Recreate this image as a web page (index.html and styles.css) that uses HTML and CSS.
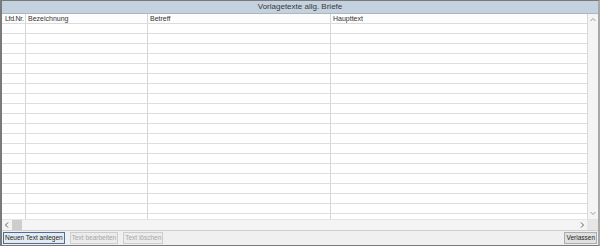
FILE: index.html
```html
<!DOCTYPE html>
<html lang="de">
<head>
    <meta charset="UTF-8">
    <title>Vorlagetexte allg. Briefe</title>
    <link rel="stylesheet" href="styles.css">
</head>
<body>
<div class="window">
    <div class="titlebar">Vorlagetexte allg. Briefe</div>
    <div class="gridArea">
        <div class="table">
            <div class="row head">
                <div class="cell c1">Lfd.Nr.</div>
                <div class="cell c2">Bezeichnung</div>
                <div class="cell c3">Betreff</div>
                <div class="cell c4">Haupttext</div>
            </div>
            <div class="rows" id="rows"></div>
        </div>
        <div class="vscroll">
            <svg class="arrow" width="10" height="10" viewBox="0 0 10 10"><path d="M2.5 6 L5 3.5 L7.5 6" fill="none" stroke="#9a9a9a" stroke-width="1"/></svg>
            <svg class="arrow" width="10" height="10" viewBox="0 0 10 10"><path d="M2.5 4 L5 6.5 L7.5 4" fill="none" stroke="#9a9a9a" stroke-width="1"/></svg>
        </div>
    </div>
    <div class="hscroll">
        <svg class="arrow" width="10" height="10" viewBox="0 0 10 10"><path d="M6 2.5 L3.5 5 L6 7.5" fill="none" stroke="#606060" stroke-width="1"/></svg>
        <div class="thumb"></div>
        <div class="track"></div>
        <svg class="arrow" width="10" height="10" viewBox="0 0 10 10"><path d="M4 2.5 L6.5 5 L4 7.5" fill="none" stroke="#606060" stroke-width="1"/></svg>
        <div class="corner"></div>
    </div>
    <div class="buttons">
        <button class="btn default">Neuen Text anlegen</button>
        <button class="btn" disabled>Text bearbeiten</button>
        <button class="btn" disabled>Text löschen</button>
        <span class="spacer"></span>
        <button class="btn">Verlassen</button>
    </div>
</div>
<script>
    var rows = document.getElementById("rows")
    for (var i = 0; i < 20; i++) {
        rows.innerHTML += '<div class="row"><div class="cell c1"></div><div class="cell c2"></div><div class="cell c3"></div><div class="cell c4"></div></div>'
    }
</script>
</body>
</html>
```

FILE: styles.css
```css
body {
    margin: 0;
    font-family: "Liberation Sans", Arial, sans-serif;
    font-size: 7px;
    color: #1e1e1e;
}

.window {
    width: 600px;
    height: 246px;
    box-sizing: border-box;
    border: 1px solid #7a7a7a;
    border-left-width: 2px;
    border-right: 2px solid #a8a8a8;
    background: #f0f0f0;
    display: flex;
    flex-direction: column;
    overflow: hidden;
}

.titlebar {
    height: 12px;
    line-height: 12px;
    flex: none;
    text-align: center;
    font-size: 8px;
    background: #c4d1de;
    border-bottom: 1px solid #a9b6c3;
    color: #3a3a3a;
}

.gridArea {
    flex: 1;
    display: flex;
    min-height: 0;
    background: #fff;
}

.table {
    flex: 1;
    overflow: hidden;
}

.rows {
    overflow: hidden;
}

.row {
    display: flex;
    height: 10px;
    border-bottom: 1px solid #dedede;
    box-sizing: border-box;
}
.row.head {
    border-bottom: 1px solid #dcdcdc;
    background: #fdfdfd;
}

.cell {
    height: 100%;
    line-height: 10px;
    border-right: 1px solid #d6d6d6;
    box-sizing: border-box;
    padding-left: 2px;
    white-space: nowrap;
    overflow: hidden;
    color: #333;
}
.c1 { width: 24px; padding-left: 3px; letter-spacing: -0.3px; }
.c2 { width: 122px; }
.c3 { width: 183px; }
.c4 { flex: 1; border-right: none; }

.vscroll {
    width: 10px;
    flex: none;
    display: flex;
    flex-direction: column;
    justify-content: space-between;
    align-items: center;
    background: #f4f4f4;
    border-left: 1px solid #d8d8d8;
    padding: 1px 0 1px;
}

.arrow {
    display: block;
    flex: none;
}

.hscroll {
    height: 10px;
    flex: none;
    display: flex;
    align-items: center;
    background: #f4f4f4;
    border-top: 1px solid #e4e4e4;
}
.hscroll .thumb {
    width: 10px;
    height: 10px;
    background: #cdcdcd;
}
.hscroll .track {
    flex: 1;
}
.hscroll .corner {
    width: 11px;
    height: 10px;
    background: #e6e6e6;
}

.buttons {
    height: 14px;
    flex: none;
    display: flex;
    align-items: center;
    gap: 5px;
    padding: 0 1px;
    border-top: 1px solid #d0d0d0;
}
.spacer {
    flex: 1;
}

.btn {
    font-family: inherit;
    font-size: 6.5px;
    height: 12px;
    line-height: 10px;
    padding: 0 1px;
    margin: 0;
    background: #e1e1e1;
    border: 1px solid #adadad;
    color: #1e1e1e;
}
.btn.default {
    border-color: #4a6f9c;
    background: #e5eaf0;
}
.btn:disabled {
    color: #a6a6a6;
    border-color: #cdcdcd;
    background: #ececec;
}
```
